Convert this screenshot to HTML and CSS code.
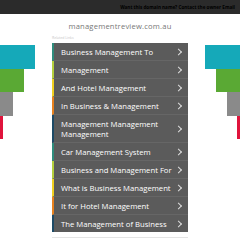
FILE: index.html
```html
<!DOCTYPE html>
<html lang="en">
<head>
    <meta charset="UTF-8">
    <meta name="viewport" content="width=device-width, initial-scale=1.0">
    <title>managementreview.com.au</title>
    <link rel="stylesheet" href="styles.css">
</head>
<body>

    <div class="topbar">
        <span class="topbar-text">Want this domain name? Contact the owner Email</span>
    </div>

    <h1 class="domain">managementreview.com.au</h1>

    <div class="page">
        <div class="bars left">
            <div class="bar cyan"></div>
            <div class="bar green"></div>
            <div class="bar gray"></div>
            <div class="bar red"></div>
        </div>

        <div class="links">
            <div class="links-label">Related Links</div>
            <ul class="link-list">
                <li class="teal"><a href="#">Business Management To</a></li>
                <li class="lime"><a href="#">Management</a></li>
                <li class="yellow"><a href="#">And Hotel Management</a></li>
                <li class="orange"><a href="#">In Business &amp; Management</a></li>
                <li class="navy double"><a href="#">Management Management Management</a></li>
                <li class="teal"><a href="#">Car Management System</a></li>
                <li class="lime"><a href="#">Business and Management For</a></li>
                <li class="yellow"><a href="#">What is Business Management</a></li>
                <li class="orange"><a href="#">It for Hotel Management</a></li>
                <li class="navy"><a href="#">The Management of Business</a></li>
            </ul>
            <div class="search"></div>
        </div>

        <div class="bars right">
            <div class="bar cyan"></div>
            <div class="bar green"></div>
            <div class="bar gray"></div>
            <div class="bar red"></div>
        </div>
    </div>

</body>
</html>
```

FILE: styles.css
```css
html, body {
    overflow: hidden;
}
body {
    margin: 0;
    font-family: "Open Sans", Arial, sans-serif;
    background: #fff;
}
.topbar {
    height: 14px;
    background-color: #2b2b2b;
    display: flex;
    justify-content: flex-end;
    align-items: center;
    padding-right: 5px;
}
.topbar-text {
    font-size: 4.6px;
    font-weight: bold;
    color: #000;
}
.domain {
    margin: 6px 0 0;
    height: 14px;
    font-size: 7.6px;
    line-height: 13px;
    font-weight: normal;
    color: #777;
    text-align: center;
    letter-spacing: 0.2px;
}
.page {
    display: grid;
    grid-template-columns: 52px 136px 52px;
}
.bars {
    margin-top: 11px;
    display: flex;
    flex-direction: column;
}
.bars.right {
    align-items: flex-end;
}
.bar {
    height: 24px;
}
.bar.cyan { width: 35px; background-color: #15a9b9; }
.bar.green { width: 24px; background-color: #5aa934; height: 23px; }
.bar.gray { width: 13px; background-color: #8a8a8a; }
.bar.red { width: 3px; background-color: #e0143c; height: 23px; }
.links-label {
    height: 9px;
    font-size: 3.5px;
    line-height: 8px;
    color: #c8c8c8;
}
.link-list {
    list-style: none;
    margin: 0;
    padding: 0;
    background-color: #5b5b5b;
}
.link-list li {
    border-left: 2px solid #2e8c7c;
    border-bottom: 1px solid #666;
}
.link-list li:last-child {
    border-bottom: none;
}
.link-list a {
    display: flex;
    align-items: center;
    min-height: 17px;
    padding: 0 10px 0 7px;
    position: relative;
    color: #fff;
    font-size: 7.7px;
    line-height: 10px;
    text-decoration: none;
}
.link-list a::after {
    content: '';
    position: absolute;
    right: 7px;
    top: 50%;
    width: 4px;
    height: 4px;
    border-top: 1px solid #ddd;
    border-right: 1px solid #ddd;
    transform: translateY(-50%) rotate(45deg);
}
.link-list li.double a {
    padding-top: 4px;
    padding-bottom: 3px;
    padding-right: 24px;
}
.link-list li.teal { border-left-color: #2e8c7c; }
.link-list li.lime { border-left-color: #b4cf3c; }
.link-list li.yellow { border-left-color: #f0d020; }
.link-list li.orange { border-left-color: #e8811e; }
.link-list li.navy { border-left-color: #1d4a66; }
.search {
    margin-top: 5px;
    height: 0;
    border-top: 1px solid #e4e4e4;
}
```
